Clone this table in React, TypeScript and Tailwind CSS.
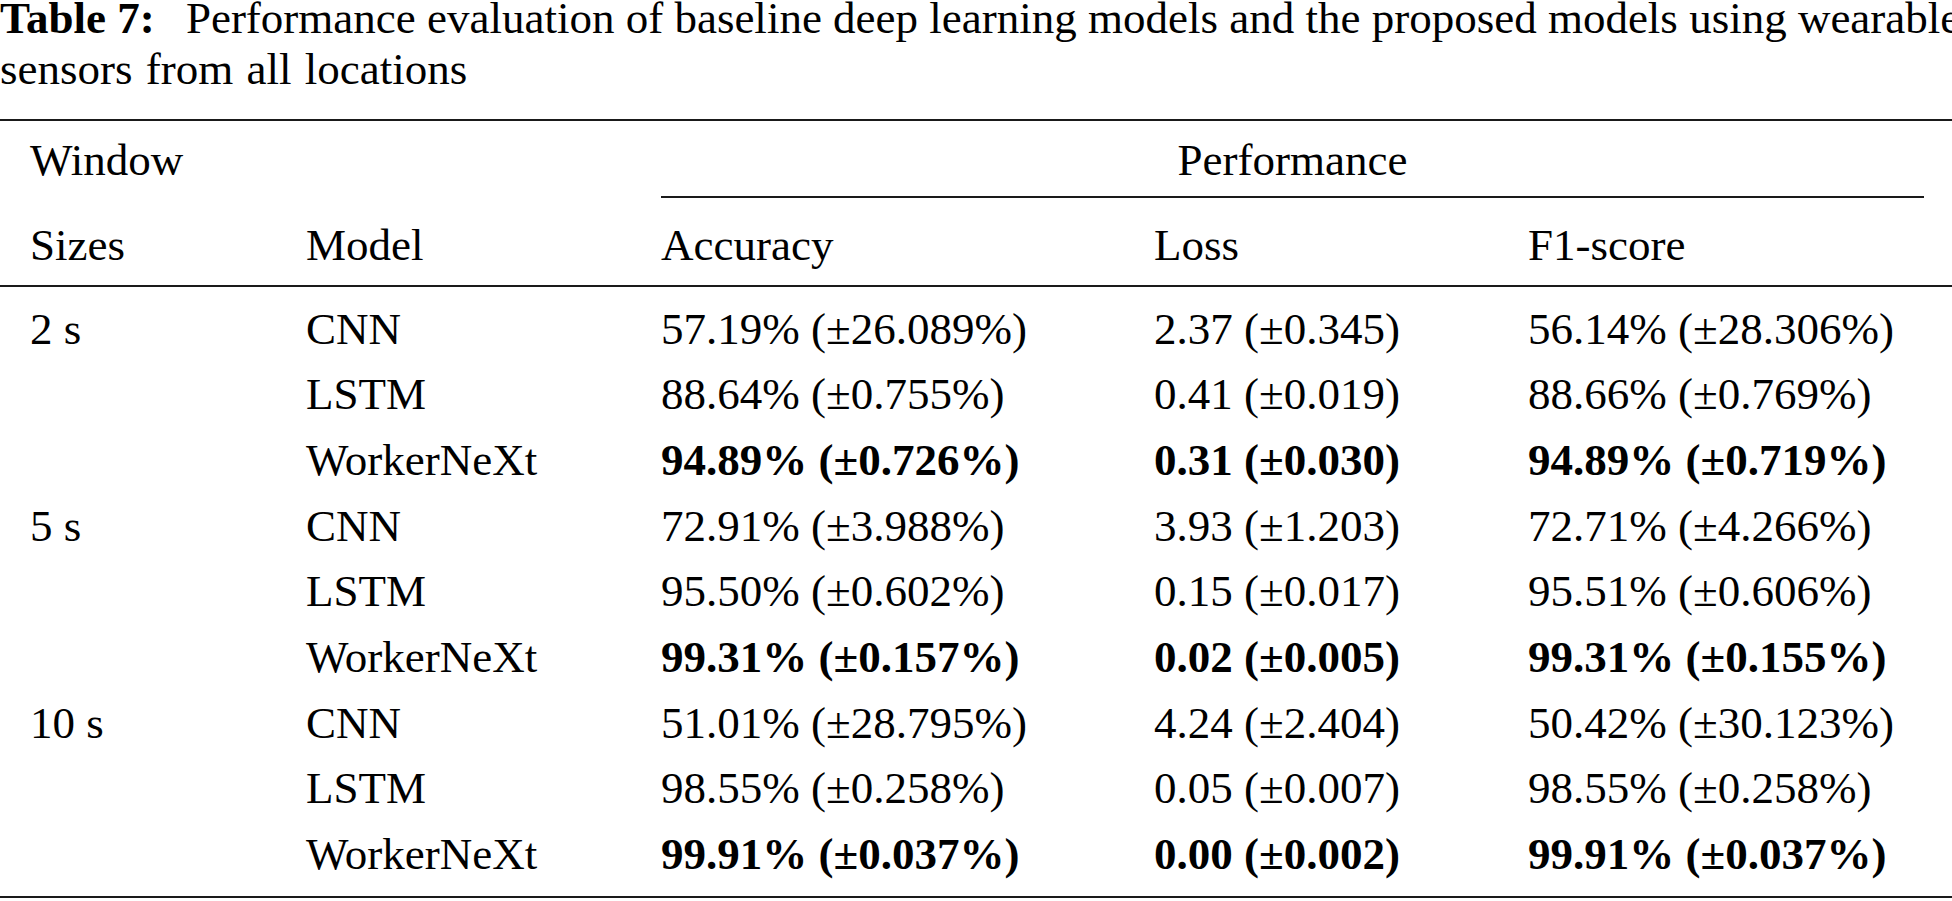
const rows = [
  { size: '2 s', model: 'CNN', acc: '57.19% (±26.089%)', loss: '2.37 (±0.345)', f1: '56.14% (±28.306%)' },
  { size: '', model: 'LSTM', acc: '88.64% (±0.755%)', loss: '0.41 (±0.019)', f1: '88.66% (±0.769%)' },
  { size: '', model: 'WorkerNeXt', acc: '94.89% (±0.726%)', loss: '0.31 (±0.030)', f1: '94.89% (±0.719%)', best: true },
  { size: '5 s', model: 'CNN', acc: '72.91% (±3.988%)', loss: '3.93 (±1.203)', f1: '72.71% (±4.266%)' },
  { size: '', model: 'LSTM', acc: '95.50% (±0.602%)', loss: '0.15 (±0.017)', f1: '95.51% (±0.606%)' },
  { size: '', model: 'WorkerNeXt', acc: '99.31% (±0.157%)', loss: '0.02 (±0.005)', f1: '99.31% (±0.155%)', best: true },
  { size: '10 s', model: 'CNN', acc: '51.01% (±28.795%)', loss: '4.24 (±2.404)', f1: '50.42% (±30.123%)' },
  { size: '', model: 'LSTM', acc: '98.55% (±0.258%)', loss: '0.05 (±0.007)', f1: '98.55% (±0.258%)' },
  { size: '', model: 'WorkerNeXt', acc: '99.91% (±0.037%)', loss: '0.00 (±0.002)', f1: '99.91% (±0.037%)', best: true },
];

const cols = 'grid grid-cols-[276px_355px_493px_374px_1fr] pl-[30px]';

export default function App() {
  return (
    <div className="h-[901px] w-full overflow-hidden bg-white font-['Liberation_Serif','Times_New_Roman',serif] text-[45px] text-black">
      {/* Caption */}
      <div className="-mt-[7px] leading-[51px]">
        <div className="whitespace-nowrap">
          <span className="mr-[20px] font-bold">Table 7:</span> Performance evaluation of baseline deep learning models and the proposed models using wearable
        </div>
        <div className="whitespace-nowrap [word-spacing:2px]">sensors from all locations</div>
      </div>

      {/* Table */}
      <div className="mt-[24px] border-t-2 border-[#1a1a1a]">
        {/* Header row 1 */}
        <div className={cols}>
          <div className="h-[74px] leading-[78px]">Window</div>
          <div />
          <div className="col-span-3 mr-[28px] h-[77px] border-b-2 border-[#1a1a1a] text-center leading-[78px]">
            Performance
          </div>
        </div>

        {/* Header row 2 */}
        <div className={`${cols} h-[88.5px] border-b-2 border-[#1a1a1a] leading-[95px]`}>
          <div>Sizes</div>
          <div>Model</div>
          <div>Accuracy</div>
          <div>Loss</div>
          <div>F1-score</div>
        </div>

        {/* Body */}
        <div className="border-b-2 border-[#1a1a1a] pb-[8.5px] pt-[10px]">
          {rows.map((r, i) => (
            <div key={i} className={`${cols} h-[65.7px] whitespace-nowrap leading-[65.7px]`}>
              <div>{r.size}</div>
              <div>{r.model}</div>
              <div className={r.best ? 'font-bold' : ''}>{r.acc}</div>
              <div className={r.best ? 'font-bold' : ''}>{r.loss}</div>
              <div className={r.best ? 'font-bold' : ''}>{r.f1}</div>
            </div>
          ))}
        </div>
      </div>
    </div>
  );
}
